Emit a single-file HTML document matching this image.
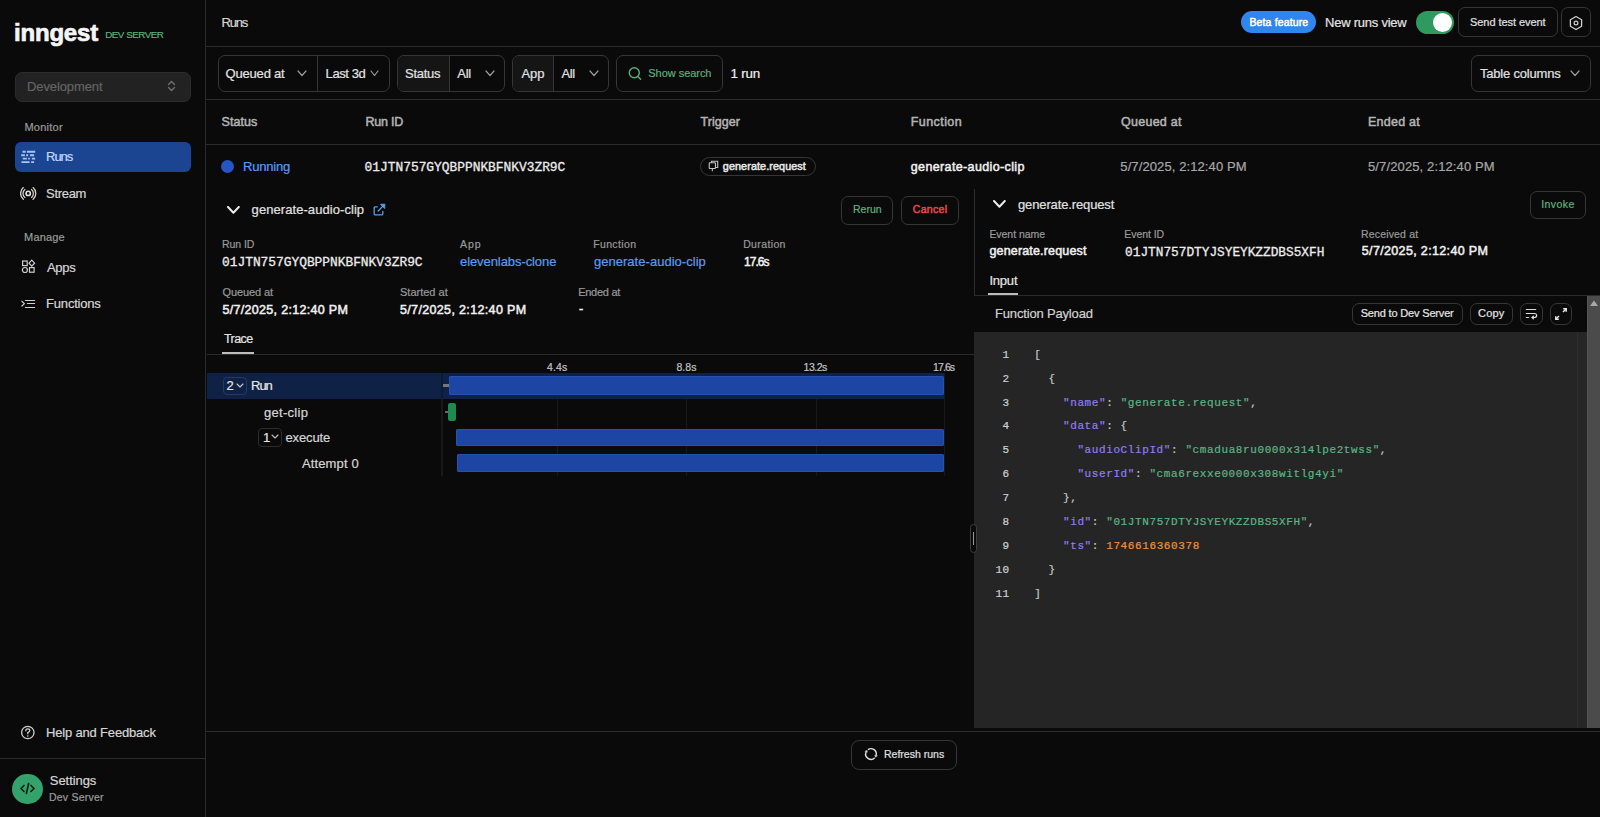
<!DOCTYPE html>
<html><head><meta charset="utf-8"><title>Runs - Inngest Dev Server</title>
<style>
html,body{margin:0;padding:0;width:1600px;height:817px;overflow:hidden;background:#0a0a0a;}
.r{position:absolute;}
.t{position:absolute;white-space:nowrap;line-height:1;}
.s{font-family:"Liberation Sans", sans-serif;-webkit-text-stroke:0.2px currentColor;}
.m{font-family:"Liberation Mono", monospace;}
</style></head><body>
<div class="r" style="left:205px;top:0px;width:1px;height:817px;background:#2b2b2b;"></div>
<div class="t s" style="left:13.96px;top:21.08px;font-size:24px;color:#f5f5f5;font-weight:700;letter-spacing:-0.187px;-webkit-text-stroke:0.7px #f5f5f5;">inngest</div>
<div class="t s" style="left:105.20px;top:29.80px;font-size:9.8px;color:#5fae7c;letter-spacing:-0.472px;">DEV SERVER</div>
<div class="r" style="left:15px;top:72px;width:176px;height:30px;background:#222222;border:1px solid #2c2c2c;box-sizing:border-box;border-radius:7px;"></div>
<div class="t s" style="left:27.10px;top:80.20px;font-size:13px;color:#646464;letter-spacing:-0.120px;">Development</div>
<svg class="r" style="left:166px;top:80px;" width="11" height="12" viewBox="0 0 11 12" fill="none"><path d="M2.5 4.5 L5.5 1.5 L8.5 4.5 M2.5 7.5 L5.5 10.5 L8.5 7.5" stroke="#707070" stroke-width="1.4" stroke-linecap="round" stroke-linejoin="round"/></svg>
<div class="t s" style="left:24.40px;top:121.99px;font-size:11px;color:#9c9c9c;letter-spacing:0.267px;">Monitor</div>
<div class="r" style="left:15px;top:142px;width:176px;height:29.5px;background:#1b4591;border-radius:6px;"></div>
<svg class="r" style="left:20px;top:149px;" width="17" height="15" viewBox="0 0 17 15" fill="none"><g stroke="#a4c4fb" stroke-width="1.9"><path d="M2.5 2.7h3.2M6.9 2.7h8.3"/><path d="M1.2 6.3h3.7M6.2 6.3h1.9M9.9 6.3h4.2"/><path d="M2.8 9.6h4.1M8.1 9.6h1.8M11.8 9.6h3.4"/><path d="M1.5 13.1h8.1M11.2 13.1h2.9"/></g></svg>
<div class="t s" style="left:46.10px;top:150.00px;font-size:13px;color:#c4d8ff;letter-spacing:-1.067px;">Runs</div>
<svg class="r" style="left:20px;top:186px;" width="17" height="16" viewBox="0 0 17 16" fill="none"><g stroke="#d0d0d0" stroke-width="1.3" stroke-linecap="round" fill="none"><path d="M4.86 3.42 A5.2 5.2 0 0 0 4.86 11.38"/><path d="M11.54 3.42 A5.2 5.2 0 0 1 11.54 11.38"/><path d="M3.31 1.58 A7.6 7.6 0 0 0 3.31 13.22"/><path d="M13.09 1.58 A7.6 7.6 0 0 1 13.09 13.22"/></g><circle cx="8.2" cy="7.4" r="2.15" stroke="#e0e0e0" stroke-width="1.6" fill="none"/></svg>
<div class="t s" style="left:46.10px;top:186.70px;font-size:13px;color:#d6d6d6;letter-spacing:-0.320px;">Stream</div>
<div class="t s" style="left:24.10px;top:231.69px;font-size:11px;color:#9c9c9c;letter-spacing:0.160px;">Manage</div>
<svg class="r" style="left:21px;top:259px;" width="15" height="15" viewBox="0 0 15 15" fill="none"><g stroke="#cfcfcf" stroke-width="1.2"><rect x="1.6" y="2" width="4.6" height="4.6"/><path d="M10.8 1.2 L13.6 4.2 L10.8 7.2 L8 4.2 Z"/><circle cx="3.9" cy="11" r="2.5"/><rect x="8.5" y="8.6" width="4.6" height="4.6"/></g></svg>
<div class="t s" style="left:46.90px;top:261.00px;font-size:13px;color:#d6d6d6;letter-spacing:-0.267px;">Apps</div>
<svg class="r" style="left:21px;top:298px;" width="15" height="11" viewBox="0 0 15 11" fill="none"><g stroke="#cfcfcf" stroke-width="1.2" stroke-linecap="round" stroke-linejoin="round" fill="none"><path d="M0.9 3.2 L3.4 5.6 L0.9 8"/><path d="M4.4 2.5 H13.6M6.4 5.5 H13.6M4.4 9.5 H13.6"/></g></svg>
<div class="t s" style="left:46.10px;top:296.90px;font-size:13px;color:#d6d6d6;letter-spacing:-0.200px;">Functions</div>
<svg class="r" style="left:20px;top:725px;" width="16" height="16" viewBox="0 0 16 16" fill="none"><circle cx="7.8" cy="7.5" r="6.2" stroke="#cfcfcf" stroke-width="1.3"/><path d="M5.8 5.8 Q5.8 3.8 7.8 3.8 Q9.8 3.8 9.8 5.6 Q9.8 7 7.8 7.6 L7.8 8.8" stroke="#cfcfcf" stroke-width="1.3" fill="none" stroke-linecap="round"/><circle cx="7.8" cy="11" r="0.8" fill="#cfcfcf"/></svg>
<div class="t s" style="left:46.00px;top:726.10px;font-size:13px;color:#d6d6d6;letter-spacing:-0.175px;">Help and Feedback</div>
<div class="r" style="left:0px;top:758px;width:205px;height:1px;background:#2b2b2b;"></div>
<div class="r" style="left:12.4px;top:773.5px;width:30.5px;height:30px;background:#33a26b;border-radius:16px;"></div>
<svg class="r" style="left:19px;top:781px;" width="17" height="15" viewBox="0 0 17 15" fill="none"><g stroke="#0b2314" stroke-width="1.7" stroke-linecap="round" stroke-linejoin="round"><path d="M5 4.5 L2 7.5 L5 10.5"/><path d="M12 4.5 L15 7.5 L12 10.5"/><path d="M9.6 2.5 L7.4 12.5"/></g></svg>
<div class="t s" style="left:49.80px;top:773.70px;font-size:13px;color:#d6d6d6;letter-spacing:-0.057px;">Settings</div>
<div class="t s" style="left:49.00px;top:791.51px;font-size:10.5px;color:#9c9c9c;letter-spacing:0.222px;">Dev Server</div>
<div class="r" style="left:206px;top:46px;width:1394px;height:1px;background:#2b2b2b;"></div>
<div class="t s" style="left:221.50px;top:16.00px;font-size:13px;color:#d6d6d6;letter-spacing:-1.200px;">Runs</div>
<div class="r" style="left:1241px;top:11px;width:75px;height:22px;background:#2e86ee;border-radius:11px;"></div>
<div class="t s" style="left:1249.40px;top:17.11px;font-size:10.5px;color:#ffffff;-webkit-text-stroke:0.5px currentColor;letter-spacing:0.145px;">Beta feature</div>
<div class="t s" style="left:1325.00px;top:15.90px;font-size:13px;color:#e4e4e4;letter-spacing:-0.233px;">New runs view</div>
<div class="r" style="left:1416px;top:11px;width:38px;height:23px;background:#2e9a60;border-radius:12px;"></div>
<div class="r" style="left:1433px;top:13px;width:19px;height:19px;background:#ffffff;border-radius:10px;"></div>
<div class="r" style="left:1458px;top:7px;width:100px;height:30px;border:1px solid #363636;box-sizing:border-box;border-radius:7px;"></div>
<div class="t s" style="left:1470.00px;top:17.19px;font-size:11px;color:#e0e0e0;letter-spacing:-0.057px;">Send test event</div>
<div class="r" style="left:1561px;top:7px;width:30px;height:30px;border:1px solid #363636;box-sizing:border-box;border-radius:7px;"></div>
<svg class="r" style="left:1568px;top:14.7px;" width="16" height="16" viewBox="0 0 16 16" fill="none"><path d="M8 1.5 L13.6 4.75 L13.6 11.25 L8 14.5 L2.4 11.25 L2.4 4.75 Z" stroke="#d0d0d0" stroke-width="1.3" stroke-linejoin="round"/><circle cx="8" cy="8" r="1.9" stroke="#d0d0d0" stroke-width="1.2"/></svg>
<div class="r" style="left:206px;top:99px;width:1394px;height:1px;background:#2b2b2b;"></div>
<div class="r" style="left:218px;top:55px;width:172px;height:37px;border:1px solid #363636;box-sizing:border-box;border-radius:7px;"></div>
<div class="r" style="left:317px;top:55px;width:1px;height:37px;background:#363636;"></div>
<div class="t s" style="left:225.60px;top:66.50px;font-size:13px;color:#e2e2e2;letter-spacing:-0.200px;">Queued at</div>
<svg class="r" style="left:297px;top:70px;" width="10" height="7" viewBox="0 0 10 7" fill="none"><path d="M1 1 L5.0 5.5 L9 1" stroke="#9a9a9a" stroke-width="1.2" stroke-linecap="round" stroke-linejoin="round"/></svg>
<div class="t s" style="left:325.60px;top:66.50px;font-size:13px;color:#e2e2e2;letter-spacing:-0.400px;">Last 3d</div>
<svg class="r" style="left:369.6px;top:70px;" width="9" height="7" viewBox="0 0 9 7" fill="none"><path d="M1 1 L4.5 5.5 L8 1" stroke="#9a9a9a" stroke-width="1.2" stroke-linecap="round" stroke-linejoin="round"/></svg>
<div class="r" style="left:397px;top:55px;width:108px;height:37px;background:#0a0a0a;border:1px solid #363636;box-sizing:border-box;border-radius:7px;"></div>
<div class="r" style="left:398px;top:56px;width:50.5px;height:35px;background:#151515;border-radius:6px 0 0 6px;"></div>
<div class="r" style="left:448.5px;top:55px;width:1px;height:37px;background:#363636;"></div>
<div class="t s" style="left:405.05px;top:66.50px;font-size:13px;color:#e2e2e2;letter-spacing:-0.280px;">Status</div>
<div class="t s" style="left:457.30px;top:66.50px;font-size:13px;color:#e2e2e2;letter-spacing:-0.300px;">All</div>
<svg class="r" style="left:484.6px;top:70px;" width="10" height="7" viewBox="0 0 10 7" fill="none"><path d="M1 1 L5.0 5.5 L9 1" stroke="#9a9a9a" stroke-width="1.2" stroke-linecap="round" stroke-linejoin="round"/></svg>
<div class="r" style="left:512px;top:55px;width:97px;height:37px;background:#0a0a0a;border:1px solid #363636;box-sizing:border-box;border-radius:7px;"></div>
<div class="r" style="left:513px;top:56px;width:39.5px;height:35px;background:#151515;border-radius:6px 0 0 6px;"></div>
<div class="r" style="left:552.5px;top:55px;width:1px;height:37px;background:#363636;"></div>
<div class="t s" style="left:521.40px;top:66.50px;font-size:13px;color:#e2e2e2;letter-spacing:-0.000px;">App</div>
<div class="t s" style="left:561.40px;top:66.50px;font-size:13px;color:#e2e2e2;letter-spacing:-0.400px;">All</div>
<svg class="r" style="left:588.6px;top:70px;" width="10" height="7" viewBox="0 0 10 7" fill="none"><path d="M1 1 L5.0 5.5 L9 1" stroke="#9a9a9a" stroke-width="1.2" stroke-linecap="round" stroke-linejoin="round"/></svg>
<div class="r" style="left:616px;top:55px;width:107px;height:37px;border:1px solid #363636;box-sizing:border-box;border-radius:7px;"></div>
<svg class="r" style="left:627px;top:66px;" width="16" height="15" viewBox="0 0 16 15" fill="none"><circle cx="7.3" cy="6.8" r="5" stroke="#5aae7c" stroke-width="1.4"/><path d="M10.9 10.4 L13.6 13.2" stroke="#5aae7c" stroke-width="1.4" stroke-linecap="round"/></svg>
<div class="t s" style="left:648.30px;top:68.49px;font-size:11px;color:#5aae7c;letter-spacing:-0.040px;">Show search</div>
<div class="t s" style="left:730.60px;top:66.86px;font-size:13.4px;color:#f0f0f0;letter-spacing:-0.200px;">1 run</div>
<div class="r" style="left:1471px;top:55px;width:120px;height:37px;border:1px solid #363636;box-sizing:border-box;border-radius:7px;"></div>
<div class="t s" style="left:1480.00px;top:66.60px;font-size:13px;color:#e2e2e2;letter-spacing:-0.200px;">Table columns</div>
<svg class="r" style="left:1570px;top:70px;" width="10" height="7" viewBox="0 0 10 7" fill="none"><path d="M1 1 L5.0 5.5 L9 1" stroke="#9a9a9a" stroke-width="1.2" stroke-linecap="round" stroke-linejoin="round"/></svg>
<div class="t s" style="left:221.60px;top:116.32px;font-size:12.5px;color:#b4b4b4;-webkit-text-stroke:0.5px currentColor;letter-spacing:0.060px;">Status</div>
<div class="t s" style="left:365.40px;top:116.32px;font-size:12.5px;color:#b4b4b4;-webkit-text-stroke:0.5px currentColor;letter-spacing:-0.180px;">Run ID</div>
<div class="t s" style="left:700.60px;top:116.32px;font-size:12.5px;color:#b4b4b4;-webkit-text-stroke:0.5px currentColor;letter-spacing:0.033px;">Trigger</div>
<div class="t s" style="left:910.80px;top:116.32px;font-size:12.5px;color:#b4b4b4;-webkit-text-stroke:0.5px currentColor;letter-spacing:0.414px;">Function</div>
<div class="t s" style="left:1121.10px;top:116.32px;font-size:12.5px;color:#b4b4b4;-webkit-text-stroke:0.5px currentColor;letter-spacing:0.250px;">Queued at</div>
<div class="t s" style="left:1368.00px;top:116.32px;font-size:12.5px;color:#b4b4b4;-webkit-text-stroke:0.5px currentColor;letter-spacing:0.243px;">Ended at</div>
<div class="r" style="left:206px;top:144px;width:1394px;height:1px;background:#2b2b2b;"></div>
<div class="r" style="left:221px;top:160px;width:13px;height:13px;background:#2457c5;border-radius:7px;"></div>
<div class="t s" style="left:243.10px;top:160.10px;font-size:13px;color:#5a9bf2;letter-spacing:-0.200px;">Running</div>
<div class="t m" style="left:364.60px;top:162.33px;font-size:12.9px;color:#ececec;letter-spacing:-0.016px;-webkit-text-stroke:0.3px #ececec;">01JTN757GYQBPPNKBFNKV3ZR9C</div>
<div class="r" style="left:700px;top:157px;width:116px;height:19px;border:1px solid #363636;box-sizing:border-box;border-radius:10px;"></div>
<svg class="r" style="left:708px;top:160px;" width="11" height="12" viewBox="0 0 11 12" fill="none"><g stroke="#c4c4c4" stroke-width="1.1" fill="none"><rect x="1.25" y="2.75" width="6.2" height="5.8" rx="0.6"/><path d="M3.5 2.75 V1.3 H9.7 V7.5 H7.45"/><path d="M4.35 8.55 V11.2"/></g></svg>
<div class="t s" style="left:722.80px;top:160.66px;font-size:10.8px;color:#e8e8e8;-webkit-text-stroke:0.5px currentColor;letter-spacing:0.093px;">generate.request</div>
<div class="t s" style="left:910.80px;top:161.02px;font-size:12.5px;color:#f0f0f0;-webkit-text-stroke:0.5px currentColor;letter-spacing:0.367px;">generate-audio-clip</div>
<div class="t s" style="left:1120.30px;top:160.00px;font-size:13px;color:#a8a8a8;letter-spacing:0.101px;">5/7/2025, 2:12:40 PM</div>
<div class="t s" style="left:1368.00px;top:160.00px;font-size:13px;color:#a8a8a8;letter-spacing:0.122px;">5/7/2025, 2:12:40 PM</div>
<svg class="r" style="left:226.8px;top:206.2px;" width="12.8" height="8.2" viewBox="0 0 12.8 8.2" fill="none"><path d="M1 1 L6.4 6.7 L11.8 1" stroke="#ececec" stroke-width="2" stroke-linecap="round" stroke-linejoin="round"/></svg>
<div class="t s" style="left:251.60px;top:203.00px;font-size:13px;color:#e2e2e2;letter-spacing:0.067px;">generate-audio-clip</div>
<svg class="r" style="left:372px;top:202px;" width="14" height="15" viewBox="0 0 14 15" fill="none"><g stroke="#5a9ce8" stroke-width="1.3" stroke-linecap="round" stroke-linejoin="round" fill="none"><path d="M5.3 4.8 H3.3 Q2.2 4.8 2.2 5.9 V11.9 Q2.2 12.9 3.3 12.9 H9.7 Q10.8 12.9 10.8 11.9 V9.3"/><path d="M6.2 9 L11.6 3.4"/></g><path d="M8.4 2.3 L12.9 2.1 L12.7 6.6 Z" fill="#5a9ce8" stroke="#5a9ce8" stroke-width="0.8" stroke-linejoin="round"/></svg>
<div class="r" style="left:841px;top:196px;width:52px;height:29px;border:1px solid #363636;box-sizing:border-box;border-radius:7px;"></div>
<div class="t s" style="left:853.00px;top:204.41px;font-size:10.5px;color:#5db27f;letter-spacing:0.000px;">Rerun</div>
<div class="r" style="left:900.5px;top:196px;width:58px;height:29px;border:1px solid #363636;box-sizing:border-box;border-radius:7px;"></div>
<div class="t s" style="left:912.80px;top:204.41px;font-size:10.5px;color:#e5484d;-webkit-text-stroke:0.5px currentColor;letter-spacing:0.320px;">Cancel</div>
<div class="t s" style="left:222.10px;top:239.01px;font-size:10.5px;color:#9a9a9a;letter-spacing:-0.080px;">Run ID</div>
<div class="t s" style="left:460.00px;top:239.41px;font-size:10.5px;color:#9a9a9a;letter-spacing:1.000px;">App</div>
<div class="t s" style="left:593.15px;top:239.41px;font-size:10.5px;color:#9a9a9a;letter-spacing:0.371px;">Function</div>
<div class="t s" style="left:743.15px;top:239.41px;font-size:10.5px;color:#9a9a9a;letter-spacing:0.371px;">Duration</div>
<div class="t m" style="left:222.05px;top:256.83px;font-size:12.9px;color:#ececec;letter-spacing:-0.024px;-webkit-text-stroke:0.3px #ececec;">01JTN757GYQBPPNKBFNKV3ZR9C</div>
<div class="t s" style="left:460.00px;top:255.25px;font-size:13px;color:#5a9bf2;letter-spacing:-0.077px;">elevenlabs-clone</div>
<div class="t s" style="left:593.95px;top:255.25px;font-size:13px;color:#5a9bf2;letter-spacing:0.033px;">generate-audio-clip</div>
<div class="t s" style="left:743.95px;top:256.09px;font-size:12px;color:#f0f0f0;-webkit-text-stroke:0.5px currentColor;letter-spacing:-0.950px;">17.6s</div>
<div class="t s" style="left:222.50px;top:287.29px;font-size:11px;color:#9a9a9a;letter-spacing:-0.100px;">Queued at</div>
<div class="t s" style="left:400.00px;top:287.29px;font-size:11px;color:#9a9a9a;">Started at</div>
<div class="t s" style="left:578.15px;top:287.29px;font-size:11px;color:#9a9a9a;letter-spacing:-0.257px;">Ended at</div>
<div class="t s" style="left:222.50px;top:303.67px;font-size:12.5px;color:#f0f0f0;-webkit-text-stroke:0.5px currentColor;letter-spacing:0.303px;">5/7/2025, 2:12:40 PM</div>
<div class="t s" style="left:400.00px;top:303.67px;font-size:12.5px;color:#f0f0f0;-webkit-text-stroke:0.5px currentColor;letter-spacing:0.345px;">5/7/2025, 2:12:40 PM</div>
<div class="t s" style="left:579.00px;top:303.17px;font-size:12.5px;color:#f0f0f0;-webkit-text-stroke:0.5px currentColor;">-</div>
<div class="t s" style="left:224.00px;top:333.42px;font-size:12.5px;color:#e6e6e6;letter-spacing:-0.600px;">Trace</div>
<div class="r" style="left:222px;top:352px;width:32px;height:2px;background:#bdbdbd;"></div>
<div class="r" style="left:207px;top:354px;width:767px;height:1px;background:#2b2b2b;"></div>
<div class="t s" style="left:547.00px;top:361.91px;font-size:10.5px;color:#c4c4c4;letter-spacing:0.100px;">4.4s</div>
<div class="t s" style="left:676.40px;top:361.91px;font-size:10.5px;color:#c4c4c4;letter-spacing:0.100px;">8.8s</div>
<div class="t s" style="left:803.60px;top:361.91px;font-size:10.5px;color:#c4c4c4;letter-spacing:-0.500px;">13.2s</div>
<div class="t s" style="left:933.00px;top:361.91px;font-size:10.5px;color:#c4c4c4;letter-spacing:-0.900px;">17.6s</div>
<div class="r" style="left:557px;top:373px;width:1px;height:103px;background:#181818;"></div>
<div class="r" style="left:686px;top:373px;width:1px;height:103px;background:#181818;"></div>
<div class="r" style="left:816px;top:373px;width:1px;height:103px;background:#181818;"></div>
<div class="r" style="left:944px;top:373px;width:1px;height:103px;background:#181818;"></div>
<div class="r" style="left:441px;top:373px;width:1.5px;height:103px;background:#191919;"></div>
<div class="r" style="left:207px;top:373px;width:737px;height:26px;background:#0f2246;"></div>
<div class="r" style="left:441px;top:373px;width:1.5px;height:26px;background:#0c1a36;"></div>
<div class="r" style="left:222.5px;top:376.5px;width:24.5px;height:18px;border:1px solid #273a5e;box-sizing:border-box;border-radius:4px;"></div>
<div class="t s" style="left:226.50px;top:379.00px;font-size:13px;color:#e6e6e6;">2</div>
<svg class="r" style="left:236px;top:382.5px;" width="8" height="5.5" viewBox="0 0 8 5.5" fill="none"><path d="M1 1 L4.0 4.0 L7 1" stroke="#c0c8d8" stroke-width="1.1" stroke-linecap="round" stroke-linejoin="round"/></svg>
<div class="t s" style="left:251.00px;top:379.00px;font-size:13px;color:#e6e6e6;letter-spacing:-1.000px;">Run</div>
<div class="r" style="left:448.5px;top:376px;width:495.5px;height:19px;background:#1d46a4;border-radius:2px;box-shadow:inset 0 0 0 1px #2452b4;"></div>
<div class="r" style="left:443px;top:384px;width:5.5px;height:3px;background:#777777;"></div>
<div class="t s" style="left:264.00px;top:406.20px;font-size:13px;color:#d6d6d6;letter-spacing:0.286px;">get-clip</div>
<div class="r" style="left:448px;top:402.5px;width:8px;height:18px;background:#1d8a4f;border-radius:2px;"></div>
<div class="r" style="left:445px;top:410.5px;width:3px;height:2px;background:#666666;"></div>
<div class="r" style="left:258.3px;top:428.3px;width:23.4px;height:18.5px;border:1px solid #2c2c2c;box-sizing:border-box;border-radius:4px;"></div>
<div class="t s" style="left:263.00px;top:431.00px;font-size:13px;color:#e6e6e6;">1</div>
<svg class="r" style="left:270.8px;top:433.5px;" width="8" height="5.5" viewBox="0 0 8 5.5" fill="none"><path d="M1 1 L4.0 4.0 L7 1" stroke="#bdbdbd" stroke-width="1.1" stroke-linecap="round" stroke-linejoin="round"/></svg>
<div class="t s" style="left:285.40px;top:430.80px;font-size:13px;color:#d6d6d6;letter-spacing:-0.100px;">execute</div>
<div class="r" style="left:456px;top:428.7px;width:488px;height:17.6px;background:#1d46a4;border-radius:2px;box-shadow:inset 0 0 0 1px #2452b4;"></div>
<div class="t s" style="left:301.90px;top:456.75px;font-size:13px;color:#d6d6d6;letter-spacing:0.150px;">Attempt 0</div>
<div class="r" style="left:456.7px;top:454.2px;width:487.3px;height:17.6px;background:#1d46a4;border-radius:2px;box-shadow:inset 0 0 0 1px #2452b4;"></div>
<div class="r" style="left:974px;top:189px;width:1px;height:107px;background:#2b2b2b;"></div>
<svg class="r" style="left:993.3px;top:200.2px;" width="12.8" height="8.2" viewBox="0 0 12.8 8.2" fill="none"><path d="M1 1 L6.4 6.7 L11.8 1" stroke="#ececec" stroke-width="2" stroke-linecap="round" stroke-linejoin="round"/></svg>
<div class="t s" style="left:1018.00px;top:197.70px;font-size:13px;color:#e2e2e2;letter-spacing:-0.133px;">generate.request</div>
<div class="r" style="left:1530px;top:190.5px;width:56px;height:28px;border:1px solid #363636;box-sizing:border-box;border-radius:7px;"></div>
<div class="t s" style="left:1541.20px;top:199.11px;font-size:10.5px;color:#5db27f;letter-spacing:0.420px;">Invoke</div>
<div class="t s" style="left:989.40px;top:228.71px;font-size:10.5px;color:#9a9a9a;letter-spacing:-0.044px;">Event name</div>
<div class="t s" style="left:1124.30px;top:228.71px;font-size:10.5px;color:#9a9a9a;letter-spacing:-0.057px;">Event ID</div>
<div class="t s" style="left:1361.00px;top:228.71px;font-size:10.5px;color:#9a9a9a;letter-spacing:0.160px;">Received at</div>
<div class="t s" style="left:989.40px;top:244.72px;font-size:12.5px;color:#f0f0f0;-webkit-text-stroke:0.5px currentColor;letter-spacing:0.173px;">generate.request</div>
<div class="t m" style="left:1125.10px;top:246.60px;font-size:12.8px;color:#ececec;letter-spacing:-0.016px;-webkit-text-stroke:0.3px #ececec;">01JTN757DTYJSYEYKZZDBS5XFH</div>
<div class="t s" style="left:1361.80px;top:244.72px;font-size:12.5px;color:#f0f0f0;-webkit-text-stroke:0.5px currentColor;letter-spacing:0.345px;">5/7/2025, 2:12:40 PM</div>
<div class="t s" style="left:989.40px;top:273.70px;font-size:13px;color:#e6e6e6;letter-spacing:-0.200px;">Input</div>
<div class="r" style="left:988px;top:293px;width:30px;height:2px;background:#bdbdbd;"></div>
<div class="r" style="left:974px;top:295px;width:626px;height:1px;background:#2b2b2b;"></div>
<div class="t s" style="left:995.00px;top:307.00px;font-size:13px;color:#d2d2d2;letter-spacing:-0.167px;">Function Payload</div>
<div class="r" style="left:1352px;top:303px;width:111px;height:22px;border:1px solid #363636;box-sizing:border-box;border-radius:7px;"></div>
<div class="t s" style="left:1360.70px;top:308.39px;font-size:11px;color:#e6e6e6;letter-spacing:-0.171px;">Send to Dev Server</div>
<div class="r" style="left:1470px;top:303px;width:43px;height:22px;border:1px solid #363636;box-sizing:border-box;border-radius:7px;"></div>
<div class="t s" style="left:1478.00px;top:308.39px;font-size:11px;color:#e6e6e6;letter-spacing:0.200px;">Copy</div>
<div class="r" style="left:1520px;top:303px;width:23px;height:22px;border:1px solid #363636;box-sizing:border-box;border-radius:7px;"></div>
<svg class="r" style="left:1524px;top:307px;" width="15" height="14" viewBox="0 0 15 14" fill="none"><g stroke="#dcdcdc" stroke-width="1.2" stroke-linecap="round" stroke-linejoin="round" fill="none"><path d="M2.3 2.5 H11.7"/><path d="M2.3 6.5 H10.3 Q12.6 6.5 12.6 8.5 Q12.6 10.5 10.3 10.5 H8"/><path d="M9.4 9.2 L8 10.5 L9.4 11.8"/><path d="M2.3 10.5 H4.6"/></g></svg>
<div class="r" style="left:1550px;top:303px;width:22px;height:22px;border:1px solid #363636;box-sizing:border-box;border-radius:7px;"></div>
<svg class="r" style="left:1554px;top:307px;" width="14" height="14" viewBox="0 0 14 14" fill="none"><g stroke="#e8e8e8" stroke-width="1.5" stroke-linecap="butt" stroke-linejoin="miter"><path d="M9.2 1.8 H12.2 V4.8"/><path d="M12 2 L9 5"/><path d="M4.8 12.2 H1.8 V9.2"/><path d="M2 12 L5 9"/></g></svg>
<div class="r" style="left:1587px;top:296px;width:13px;height:432px;background:#4b4b4b;"></div>
<div class="r" style="left:1587px;top:296px;width:1px;height:432px;background:#565656;"></div>
<svg class="r" style="left:1589px;top:299px;" width="10" height="8" viewBox="0 0 10 8" fill="none"><path d="M1 7 L5 1.5 L9 7 Z" fill="#a9a9a9"/></svg>
<div class="r" style="left:974px;top:332px;width:613px;height:396px;background:#252525;"></div>
<div class="r" style="left:1577px;top:332px;width:1px;height:396px;background:#2e2e2e;"></div>
<div class="r" style="left:1578px;top:332px;width:9px;height:396px;background:#262626;"></div>
<div class="r" style="left:970px;top:524px;width:7px;height:28.5px;background:#0a0a0a;border:1px solid #3e3e3e;box-sizing:border-box;border-radius:4px;"></div>
<div class="r" style="left:972.8px;top:532px;width:1.6px;height:13px;background:#9a9a9a;"></div>
<div class="r" style="left:206px;top:731px;width:1394px;height:1px;background:#2b2b2b;"></div>
<div class="r" style="left:851.4px;top:739.5px;width:105.5px;height:30.5px;border:1px solid #363636;box-sizing:border-box;border-radius:8px;"></div>
<svg class="r" style="left:863px;top:746px;" width="16" height="16" viewBox="0 0 16 16" fill="none"><g stroke="#e0e0e0" stroke-width="1.4" fill="none"><path d="M4.96 3.66 A5.3 5.3 0 0 1 13.12 9.37"/><path d="M11.75 11.75 A5.3 5.3 0 0 1 3.2 5.76"/></g><g fill="#e0e0e0"><path d="M12.5 11.4 L14.9 9.6 L11.4 8.9 Z"/><path d="M4.1 3.9 L1.5 5.2 L4.8 6.6 Z"/></g></svg>
<div class="t s" style="left:884.00px;top:748.61px;font-size:10.5px;color:#e0e0e0;letter-spacing:0.005px;">Refresh runs</div>
<div class="t m" style="left:1002.60px;top:349.72px;font-size:11px;color:#d2d2d2;letter-spacing:0.6px;-webkit-text-stroke:0.2px currentColor;">1</div>
<div class="t m" style="left:1034.20px;top:349.72px;font-size:11px;color:#c8c8c8;letter-spacing:0.6px;-webkit-text-stroke:0.2px currentColor;">[</div>
<div class="t m" style="left:1002.60px;top:373.64px;font-size:11px;color:#d2d2d2;letter-spacing:0.6px;-webkit-text-stroke:0.2px currentColor;">2</div>
<div class="t m" style="left:1048.60px;top:373.64px;font-size:11px;color:#c8c8c8;letter-spacing:0.6px;-webkit-text-stroke:0.2px currentColor;">{</div>
<div class="t m" style="left:1002.60px;top:397.56px;font-size:11px;color:#d2d2d2;letter-spacing:0.6px;-webkit-text-stroke:0.2px currentColor;">3</div>
<div class="t m" style="left:1063.00px;top:397.56px;font-size:11px;color:#c8c8c8;letter-spacing:0.6px;-webkit-text-stroke:0.2px currentColor;"><span style="color:#8f7ef2">"name"</span>: <span style="color:#5cb585">"generate.request"</span>,</div>
<div class="t m" style="left:1002.60px;top:421.48px;font-size:11px;color:#d2d2d2;letter-spacing:0.6px;-webkit-text-stroke:0.2px currentColor;">4</div>
<div class="t m" style="left:1063.00px;top:421.48px;font-size:11px;color:#c8c8c8;letter-spacing:0.6px;-webkit-text-stroke:0.2px currentColor;"><span style="color:#8f7ef2">"data"</span>: {</div>
<div class="t m" style="left:1002.60px;top:445.40px;font-size:11px;color:#d2d2d2;letter-spacing:0.6px;-webkit-text-stroke:0.2px currentColor;">5</div>
<div class="t m" style="left:1077.40px;top:445.40px;font-size:11px;color:#c8c8c8;letter-spacing:0.6px;-webkit-text-stroke:0.2px currentColor;"><span style="color:#8f7ef2">"audioClipId"</span>: <span style="color:#5cb585">"cmadua8ru0000x314lpe2twss"</span>,</div>
<div class="t m" style="left:1002.60px;top:469.32px;font-size:11px;color:#d2d2d2;letter-spacing:0.6px;-webkit-text-stroke:0.2px currentColor;">6</div>
<div class="t m" style="left:1077.40px;top:469.32px;font-size:11px;color:#c8c8c8;letter-spacing:0.6px;-webkit-text-stroke:0.2px currentColor;"><span style="color:#8f7ef2">"userId"</span>: <span style="color:#5cb585">"cma6rexxe0000x308witlg4yi"</span></div>
<div class="t m" style="left:1002.60px;top:493.24px;font-size:11px;color:#d2d2d2;letter-spacing:0.6px;-webkit-text-stroke:0.2px currentColor;">7</div>
<div class="t m" style="left:1063.00px;top:493.24px;font-size:11px;color:#c8c8c8;letter-spacing:0.6px;-webkit-text-stroke:0.2px currentColor;">},</div>
<div class="t m" style="left:1002.60px;top:517.16px;font-size:11px;color:#d2d2d2;letter-spacing:0.6px;-webkit-text-stroke:0.2px currentColor;">8</div>
<div class="t m" style="left:1063.00px;top:517.16px;font-size:11px;color:#c8c8c8;letter-spacing:0.6px;-webkit-text-stroke:0.2px currentColor;"><span style="color:#8f7ef2">"id"</span>: <span style="color:#5cb585">"01JTN757DTYJSYEYKZZDBS5XFH"</span>,</div>
<div class="t m" style="left:1002.60px;top:541.08px;font-size:11px;color:#d2d2d2;letter-spacing:0.6px;-webkit-text-stroke:0.2px currentColor;">9</div>
<div class="t m" style="left:1063.00px;top:541.08px;font-size:11px;color:#c8c8c8;letter-spacing:0.6px;-webkit-text-stroke:0.2px currentColor;"><span style="color:#8f7ef2">"ts"</span>: <span style="color:#f0923b">1746616360378</span></div>
<div class="t m" style="left:995.40px;top:565.00px;font-size:11px;color:#d2d2d2;letter-spacing:0.6px;-webkit-text-stroke:0.2px currentColor;">10</div>
<div class="t m" style="left:1048.60px;top:565.00px;font-size:11px;color:#c8c8c8;letter-spacing:0.6px;-webkit-text-stroke:0.2px currentColor;">}</div>
<div class="t m" style="left:995.40px;top:588.92px;font-size:11px;color:#d2d2d2;letter-spacing:0.6px;-webkit-text-stroke:0.2px currentColor;">11</div>
<div class="t m" style="left:1034.20px;top:588.92px;font-size:11px;color:#c8c8c8;letter-spacing:0.6px;-webkit-text-stroke:0.2px currentColor;">]</div>
</body></html>
